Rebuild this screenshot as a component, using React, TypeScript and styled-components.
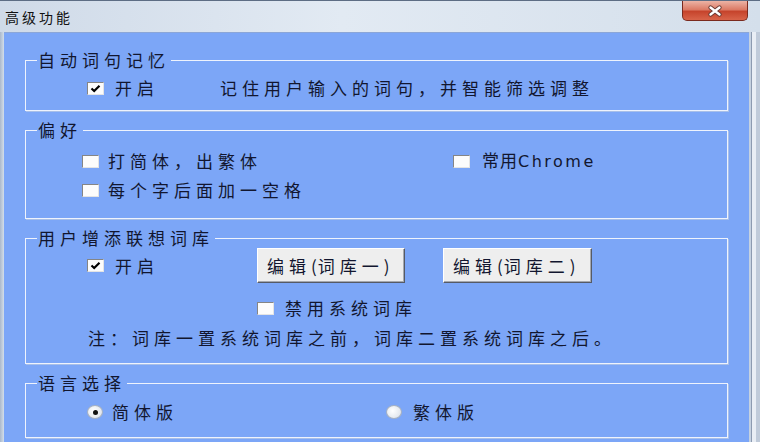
import React from 'react';
import styled, { createGlobalStyle, css } from 'styled-components';

const GlobalStyle = createGlobalStyle`
  html, body {
    margin: 0;
    padding: 0;
  }
  body {
    width: 760px;
    height: 442px;
    overflow: hidden;
    font-family: "Noto Sans CJK SC", "Noto Sans", sans-serif;
  }
`;

const uiText = css`
  font-family: "Noto Sans CJK SC", "Noto Sans", sans-serif;
  font-size: 17px;
  line-height: 22px;
  letter-spacing: 5px;
  color: #12162f;
  white-space: nowrap;
`;

const Window = styled.div`
  width: 760px;
  height: 442px;
  box-sizing: border-box;
  display: flex;
  flex-direction: column;
  border-top: 1px solid #5d6d84;
  background: linear-gradient(90deg, #cfdae8, #e2eaf3 45%, #d4dfeb);
  overflow: hidden;
`;

const TitleBar = styled.div`
  height: 31px;
  flex: none;
  display: flex;
  align-items: flex-start;
  justify-content: space-between;
  padding: 0 12px 0 5px;
`;

const Title = styled.span`
  margin-top: 7px;
  font-size: 14px;
  line-height: 18px;
  letter-spacing: 3px;
  color: #111;
`;

const CloseButton = styled.div`
  width: 66px;
  height: 20px;
  box-sizing: border-box;
  border: 1px solid #7a2a1e;
  border-top: none;
  border-radius: 0 0 5px 5px;
  background: linear-gradient(#ecb3a5, #dc7b66 45%, #c6442c 55%, #d8644a);
  display: flex;
  align-items: center;
  justify-content: center;
`;

const Frame = styled.div`
  flex: 1;
  min-height: 0;
  display: flex;
`;

const LeftEdge = styled.div`
  width: 4px;
  flex: none;
  background: linear-gradient(90deg, #aab8cb, #d3deea);
`;

const RightEdge = styled.div`
  width: 11px;
  flex: none;
  background: linear-gradient(90deg, #c5d1e0 0 2px, #8d9bb1 2px 3px, #e9eef5 3px 7px, #c0cbda 7px);
`;

const Client = styled.div`
  flex: 1;
  box-sizing: border-box;
  border-top: 1px solid #8ba6d8;
  background: #7ca6f7;
  padding: 17px 21px 0;
  display: flex;
  flex-direction: column;
  gap: 9px;
`;

const Group = styled.fieldset<{ $bottom: number }>`
  margin: 0;
  padding: 0 0 ${p => p.$bottom}px;
  border: 1px solid #eef3fd;
  box-shadow: 1px 1px 0 #a8bfe8;
  min-inline-size: 0;
  display: flex;
  flex-direction: column;
`;

const Legend = styled.legend`
  ${uiText};
  line-height: 20px;
  margin-left: 11px;
  padding: 0 1px;
`;

const Row = styled.div<{ $top: number; $indent: number; $height?: number }>`
  display: flex;
  align-items: center;
  margin-top: ${p => p.$top}px;
  padding-left: ${p => p.$indent}px;
  height: ${p => p.$height ?? 22}px;
`;

const Option = styled.label<{ $width?: number; $gap: number }>`
  display: flex;
  align-items: center;
  gap: ${p => p.$gap}px;
  width: ${p => (p.$width ? `${p.$width}px` : 'auto')};
  flex: none;
`;

const Text = styled.span`
  ${uiText};
`;

const Narrow = styled.span`
  letter-spacing: 1px;
`;

const Latin = styled.span`
  font-family: "DejaVu Sans", sans-serif;
  font-size: 16px;
  letter-spacing: 2.5px;
`;

const Paren = styled.span`
  letter-spacing: 1px;
`;

const Box = styled.span`
  width: 17px;
  height: 13px;
  box-sizing: border-box;
  flex: none;
  display: flex;
  align-items: center;
  justify-content: center;
  background: #fcfcfc;
  border: 1px solid;
  border-color: #858585 #e4e4e4 #e4e4e4 #858585;
`;

const Radio = styled.span<{ $on: boolean }>`
  width: 16px;
  height: 14px;
  box-sizing: border-box;
  flex: none;
  border-radius: 50%;
  border: 1px solid #a9b3c2;
  background: radial-gradient(circle at 40% 40%, #ffffff, #e4e8ee 70%, #c8ced8);
  display: flex;
  align-items: center;
  justify-content: center;

  &::after {
    content: '';
    width: 5px;
    height: 5px;
    border-radius: 50%;
    background: ${p => (p.$on ? '#111' : 'transparent')};
  }
`;

const Button = styled.button<{ $width: number }>`
  ${uiText};
  width: ${p => p.$width}px;
  height: 35px;
  box-sizing: border-box;
  padding: 0 0 0 9px;
  text-align: left;
  background: #eeeeee;
  border: 1px solid;
  border-color: #ffffff #555a66 #555a66 #ffffff;
  box-shadow: inset -1px -1px 0 #a5a8ae;
  cursor: default;
  flex: none;
`;

const Spacer = styled.span<{ $w: number }>`
  width: ${p => p.$w}px;
  flex: none;
`;

const Check: React.FC<{ on?: boolean }> = ({ on }) => (
  <Box>
    {on && (
      <svg width="11" height="9" viewBox="0 0 11 9">
        <polyline points="1.5,4.5 4.2,7 9.5,1.8" fill="none" stroke="#000" strokeWidth="2.2" />
      </svg>
    )}
  </Box>
);

const CloseIcon = () => (
  <svg width="18" height="12" viewBox="0 0 18 12">
    <path d="M4.5 2.5 L13.5 9.5 M13.5 2.5 L4.5 9.5" stroke="#6b3a32" strokeWidth="4.2" strokeLinecap="round" />
    <path d="M4.5 2.5 L13.5 9.5 M13.5 2.5 L4.5 9.5" stroke="#ffffff" strokeWidth="2.4" strokeLinecap="round" />
  </svg>
);

const App: React.FC = () => {
  return (
    <>
      <GlobalStyle />
      <Window>
        <TitleBar>
          <Title>高级功能</Title>
          <CloseButton>
            <CloseIcon />
          </CloseButton>
        </TitleBar>
        <Frame>
          <LeftEdge />
          <Client>
            <Group $bottom={11}>
              <Legend>自动词句记忆</Legend>
              <Row $top={7} $indent={61}>
                <Option $width={133} $gap={11}>
                  <Check on />
                  <Text>开启</Text>
                </Option>
                <Text>记住用户输入的词句，并智能筛选调整</Text>
              </Row>
            </Group>

            <Group $bottom={17}>
              <Legend>偏好</Legend>
              <Row $top={10} $indent={56}>
                <Option $width={371} $gap={9}>
                  <Check />
                  <Text>打简体，出繁体</Text>
                </Option>
                <Option $gap={12}>
                  <Check />
                  <Text>
                    <Narrow>常用</Narrow>
                    <Latin>Chrome</Latin>
                  </Text>
                </Option>
              </Row>
              <Row $top={7} $indent={56}>
                <Option $gap={9}>
                  <Check />
                  <Text>每个字后面加一空格</Text>
                </Option>
              </Row>
            </Group>

            <Group $bottom={14}>
              <Legend>用户增添联想词库</Legend>
              <Row $top={0} $indent={61} $height={35}>
                <Option $width={170} $gap={11}>
                  <Check on />
                  <Text>开启</Text>
                </Option>
                <Button $width={148}>
                  编辑<Paren>(</Paren>词库一<Paren>)</Paren>
                </Button>
                <Spacer $w={38} />
                <Button $width={149}>
                  编辑<Paren>(</Paren>词库二<Paren>)</Paren>
                </Button>
              </Row>
              <Row $top={14} $indent={231}>
                <Option $gap={11}>
                  <Check />
                  <Text>禁用系统词库</Text>
                </Option>
              </Row>
              <Row $top={8} $indent={62}>
                <Text>注：词库一置系统词库之前，词库二置系统词库之后。</Text>
              </Row>
            </Group>

            <Group $bottom={14}>
              <Legend>语言选择</Legend>
              <Row $top={8} $indent={61}>
                <Option $width={299} $gap={9}>
                  <Radio $on />
                  <Text>简体版</Text>
                </Option>
                <Option $gap={11}>
                  <Radio $on={false} />
                  <Text>繁体版</Text>
                </Option>
              </Row>
            </Group>
          </Client>
          <RightEdge />
        </Frame>
      </Window>
    </>
  );
};

export default App;
